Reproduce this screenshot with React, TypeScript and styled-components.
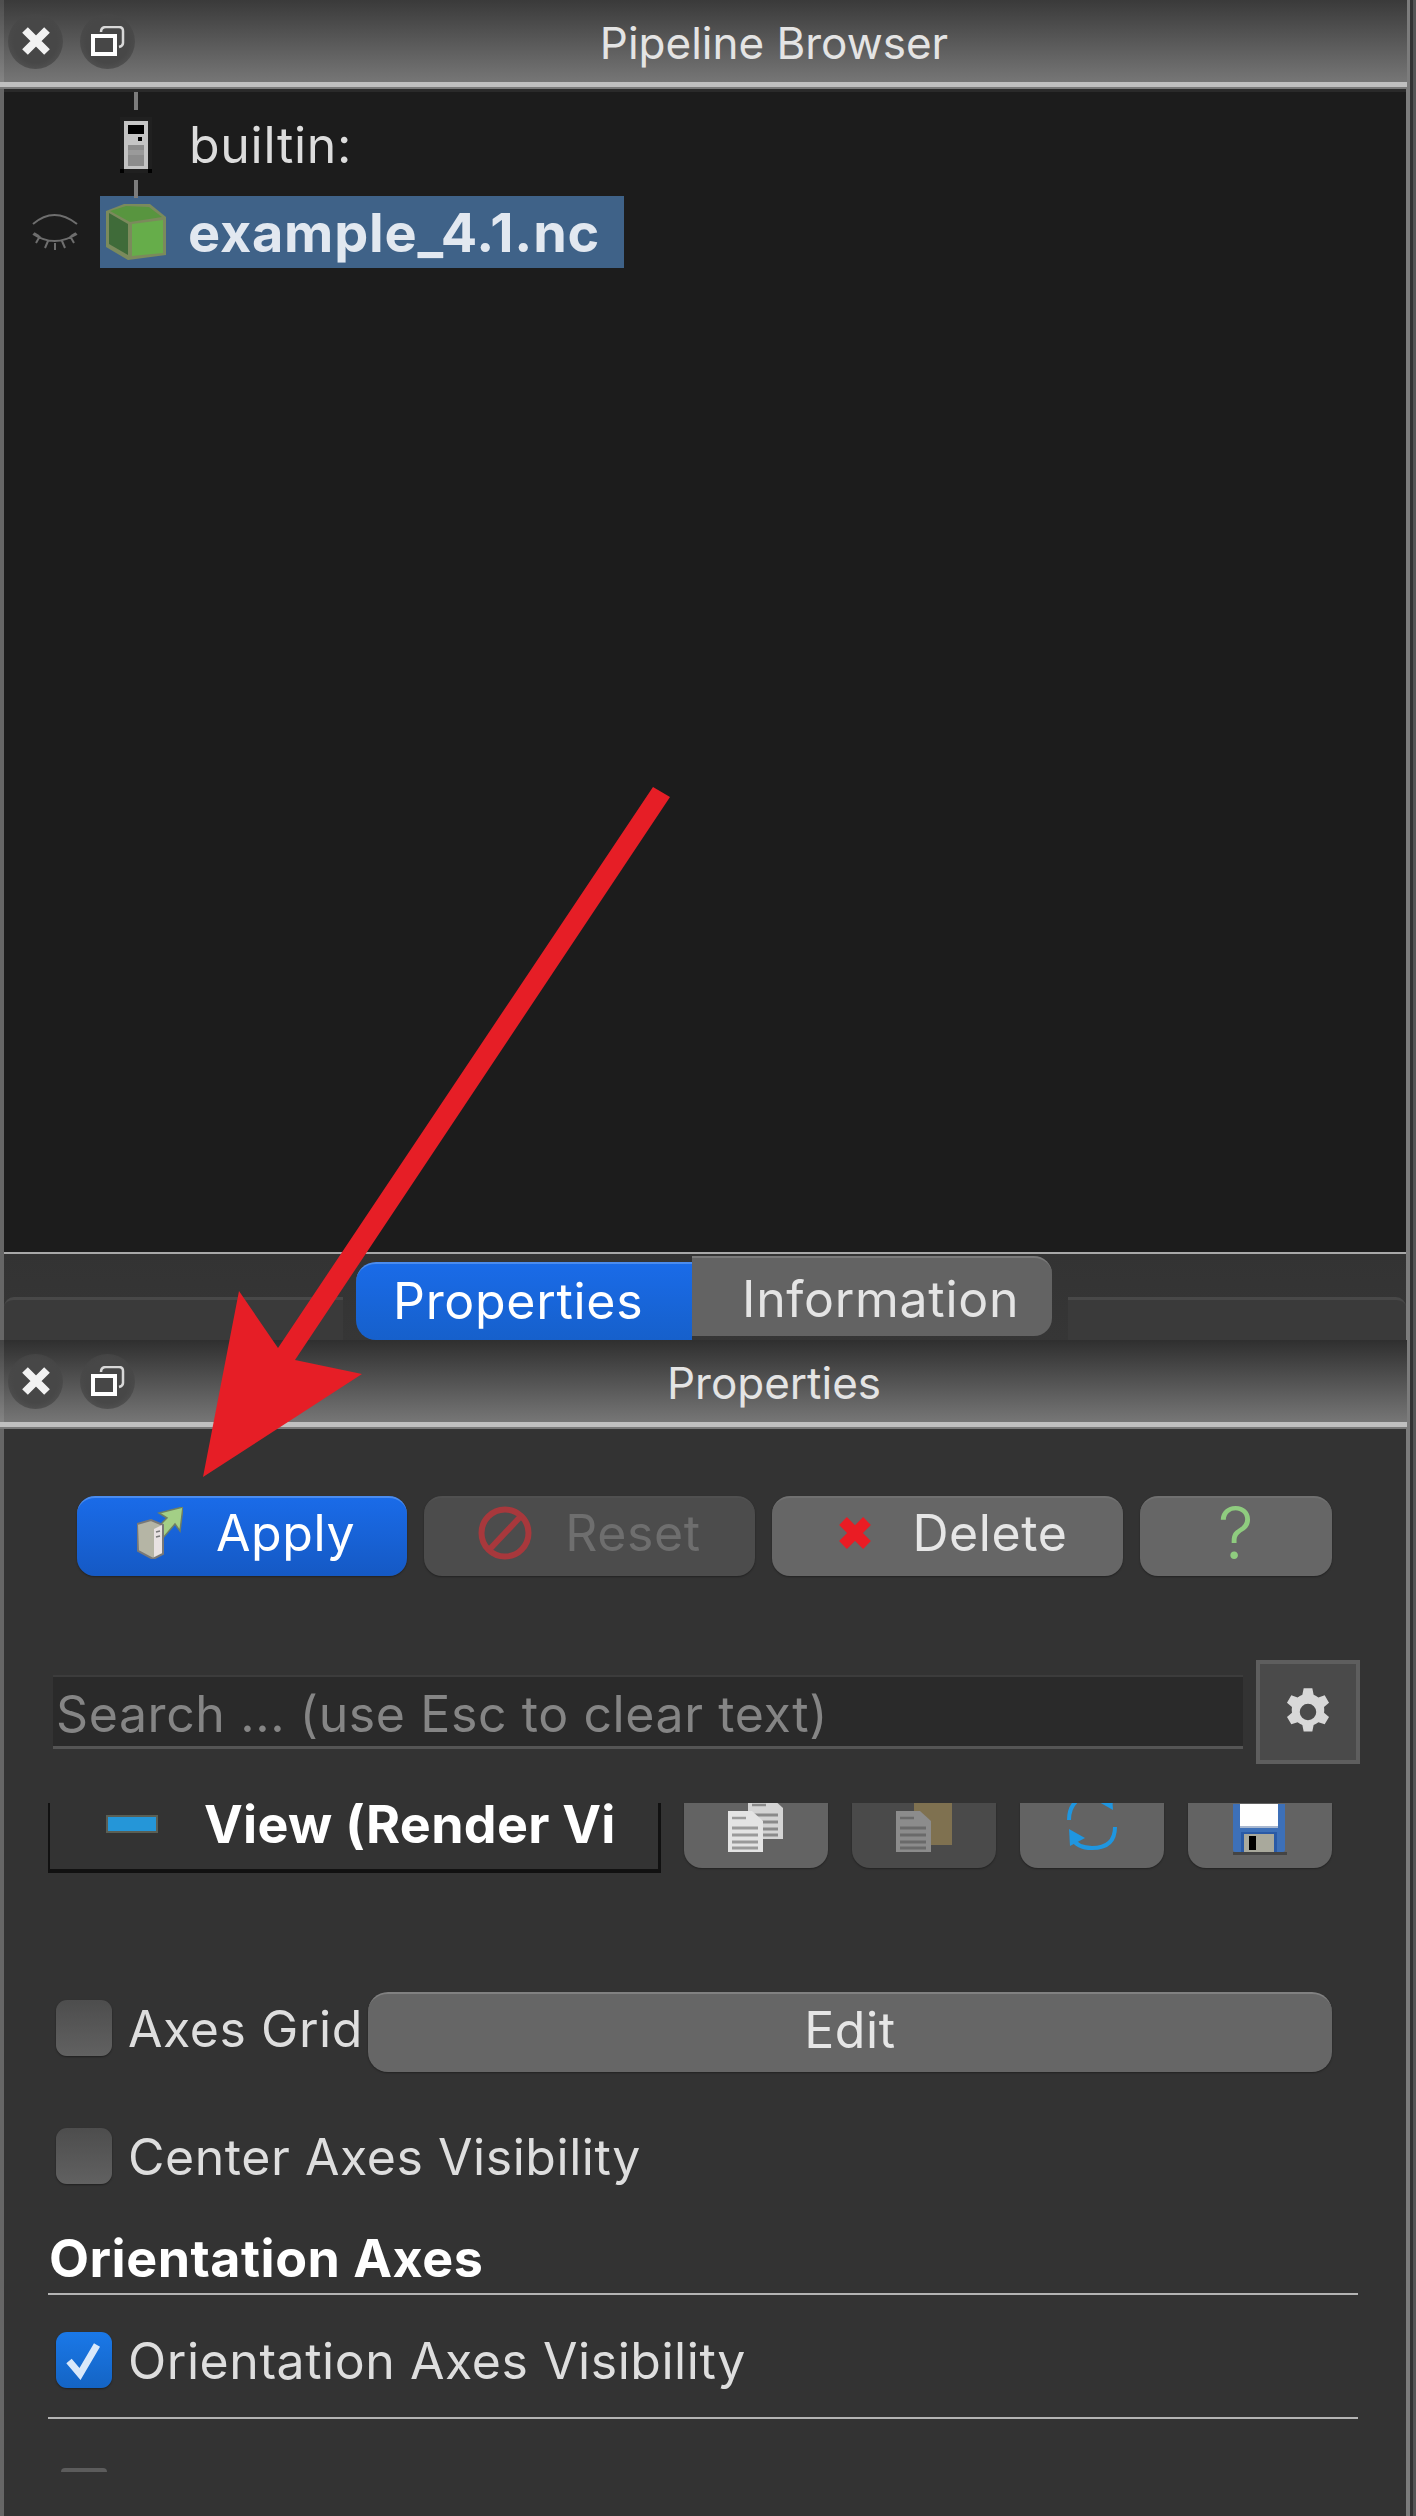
import React from "react";
import styled, { createGlobalStyle } from "styled-components";

const Global = createGlobalStyle`
  html, body { margin: 0; padding: 0; background: #333; }
  body { font-family: Inter, "Liberation Sans", Arial, sans-serif; }
`;

const Page = styled.div`
  position: relative;
  width: 1416px;
  height: 2516px;
  overflow: hidden;
  background: #333;
  box-shadow: inset -3px 0 0 #555;
  display: flex;
  flex-direction: column;
  color: #e6e6e6;
`;

const Dock = styled.section<{ $h: number }>`
  width: 1410px;
  height: ${(p) => p.$h}px;
  display: flex;
  flex-direction: column;
  flex: none;
  box-sizing: border-box;
  border-left: 4px solid #666;
  border-right: 4px solid #7c7c7c;
`;

const TitleBar = styled.header<{ $top: string }>`
  height: 82px;
  margin-left: -4px;
  margin-right: -1px;
  flex: none;
  display: flex;
  align-items: center;
  background: linear-gradient(${(p) => p.$top}, #767676);
  border-bottom: 5px solid #c0c0c0;
  box-shadow: inset 4px 0 0 rgba(255, 255, 255, 0.1), 0 2px 0 #7a7a7a;
`;

const TitleButtons = styled.div`
  display: flex;
  gap: 17px;
  padding-left: 8px;
  flex: none;
`;

const RoundButton = styled.div`
  width: 55px;
  height: 55px;
  border-radius: 50%;
  background: radial-gradient(circle, #474747 55%, rgba(70, 70, 70, 0.6) 80%, rgba(70, 70, 70, 0) 100%);
  display: flex;
  align-items: center;
  justify-content: center;
`;

const TitleText = styled.h1`
  flex: 1;
  margin: 0;
  padding: 4px 0 0 6px;
  font-weight: 400;
  font-size: 44px;
  line-height: 60px;
  text-align: center;
  color: #e4e4e4;
`;

const TreePane = styled.div`
  flex: 1;
  min-height: 0;
  background: #1c1c1c;
  border-top: 3px solid #2a2a2a;
  margin-top: 2px;
  display: flex;
  flex-direction: column;
`;

const Connector = styled.div`
  position: relative;
  z-index: 1;
  width: 4px;
  height: 18px;
  margin-left: 130px;
  background: #7c7c7c;
  flex: none;
`;

const ServerRow = styled.div`
  height: 70px;
  padding-left: 116px;
  display: flex;
  align-items: center;
  flex: none;
`;

const SourceRow = styled.div`
  height: 72px;
  margin-top: -2px;
  display: flex;
  align-items: center;
  flex: none;
`;

const EyeSlot = styled.div`
  width: 96px;
  flex: none;
  display: flex;
  padding-left: 28px;
  box-sizing: border-box;
`;

const ServerLabel = styled.span`
  margin-left: 37px;
  font-size: 50px;
  letter-spacing: 0.7px;
  color: #dcdcdc;
`;

const Selected = styled.div`
  display: flex;
  align-items: center;
  height: 72px;
  width: 524px;
  padding-left: 4px;
  box-sizing: border-box;
  background: #3f6288;
`;

const SourceLabel = styled.span`
  margin-left: 20px;
  font-size: 54px;
  font-weight: 700;
  color: #e2e8f0;
  letter-spacing: 0.8px;
`;

const TabStrip = styled.div`
  height: 88px;
  flex: none;
  position: relative;
  display: flex;
  padding-left: 352px;
  background: linear-gradient(#333, #363636);
  border-top: 2px solid #a8a8a8;
  box-sizing: border-box;
`;

const FrameEdge = styled.div<{ $side: "left" | "right" }>`
  position: absolute;
  top: 43px;
  bottom: 0;
  ${(p) => (p.$side === "left" ? "left: 0; width: 339px; border-radius: 10px 0 0 0;" : "right: 0; width: 338px; border-radius: 0 10px 0 0;")}
  background: #3a3a3a;
  border-top: 3px solid #484848;
  box-sizing: border-box;
`;

const TabGroup = styled.div`
  display: flex;
  position: relative;
  align-items: flex-start;
  width: 696px;
`;

const ActiveTab = styled.div`
  width: 336px;
  height: 78px;
  margin-top: 8px;
  flex: none;
  box-sizing: border-box;
  padding-left: 37px;
  font-size: 50px;
  letter-spacing: 0.7px;
  line-height: 74px;
  color: #fff;
  background: linear-gradient(#1a6be8, #1660cb);
  border-top: 2px solid #4a8cf0;
  border-radius: 20px 0 0 20px;
`;

const IdleTab = styled.div`
  width: 360px;
  height: 80px;
  margin-top: 2px;
  flex: none;
  box-sizing: border-box;
  padding-left: 50px;
  font-size: 50px;
  letter-spacing: 0.7px;
  line-height: 82px;
  color: #e4e4e4;
  background: #636363;
  border-top: 2px solid #7a7a7a;
  border-radius: 0 18px 18px 0;
`;

const PropertiesBody = styled.div`
  flex: 1;
  min-height: 0;
  margin-top: 2px;
  display: flex;
  flex-direction: column;
  background: #333;
  overflow: hidden;
`;

const ActionRow = styled.div`
  display: flex;
  margin: 67px 0 0 73px;
  gap: 17px;
  height: 80px;
  flex: none;
`;

const ActionButton = styled.button<{ $w: number; $gap?: number; $shift?: number; $kind?: "primary" | "disabled" }>`
  width: ${(p) => p.$w}px;
  height: 80px;
  padding: 0 0 8px ${(p) => p.$shift ?? 0}px;
  box-sizing: border-box;
  display: flex;
  align-items: center;
  justify-content: center;
  gap: ${(p) => p.$gap ?? 33}px;
  border: none;
  border-radius: 18px;
  font-family: inherit;
  font-size: 50px;
  letter-spacing: 0.6px;
  color: ${(p) => (p.$kind === "primary" ? "#fff" : p.$kind === "disabled" ? "#6e6e6e" : "#e6e6e6")};
  background: ${(p) =>
    p.$kind === "primary"
      ? "linear-gradient(#1a6be8, #1559c4)"
      : p.$kind === "disabled"
        ? "#4c4c4c"
        : "#666"};
  border-top: 2px solid
    ${(p) => (p.$kind === "primary" ? "#4a8cf0" : p.$kind === "disabled" ? "#505050" : "#707070")};
  box-shadow: 0 1px 2px rgba(0, 0, 0, 0.35);
`;

const HelpMark = styled.span`
  color: #8fcc7f;
  font-size: 72px;
  font-weight: 300;
  line-height: 1;
`;

const SearchRow = styled.div`
  display: flex;
  align-items: center;
  margin: 84px 0 0 49px;
  flex: none;
  height: 104px;
`;

const SearchBox = styled.div`
  width: 1190px;
  height: 74px;
  box-sizing: border-box;
  background: #2a2a2a;
  border-top: 2px solid #3c3c3c;
  border-bottom: 3px solid #555;
  font-size: 50px;
  letter-spacing: 0.6px;
  line-height: 74px;
  padding-left: 3px;
  color: #858585;
  margin-right: 13px;
  white-space: nowrap;
`;

const GearButton = styled.div`
  width: 104px;
  height: 104px;
  box-sizing: border-box;
  border: 4px solid #5e5e5e;
  background: #4a4a4a;
  display: flex;
  align-items: center;
  justify-content: center;
`;

const ClipRow = styled.div`
  height: 70px;
  margin: 39px 0 0 0;
  flex: none;
  display: flex;
  overflow: hidden;
  padding-left: 44px;
`;

const ViewLabel = styled.div`
  width: 613px;
  height: 70px;
  flex: none;
  box-sizing: border-box;
  border-left: 2px solid #111;
  border-right: 3px solid #111;
  border-bottom: 4px solid #111;
  display: flex;
  align-items: flex-start;
  white-space: nowrap;
`;

const ViewSwatch = styled.div`
  width: 52px;
  height: 18px;
  margin: 12px 46px 0 56px;
  box-sizing: border-box;
  flex: none;
  background: #2596d8;
  border: 2px solid #5a5f55;
`;

const ViewText = styled.span`
  font-size: 52px;
  font-weight: 700;
  color: #fff;
  line-height: 44px;
  letter-spacing: 0.3px;
`;

const ToolRow = styled.div`
  display: flex;
  gap: 24px;
  margin-left: 23px;
  flex: none;
`;

const ToolButton = styled.div<{ $dim?: boolean; $pb: number }>`
  width: 144px;
  height: 65px;
  box-sizing: border-box;
  padding-bottom: ${(p) => p.$pb}px;
  background: ${(p) => (p.$dim ? "#4a4a4a" : "#636363")};
  border-radius: 0 0 18px 18px;
  box-shadow: 0 1px 2px rgba(0, 0, 0, 0.35);
  display: flex;
  justify-content: center;
  align-items: flex-end;
  overflow: hidden;
`;

const CheckRow = styled.div<{ $mt: number; $h: number }>`
  display: flex;
  align-items: center;
  flex: none;
  height: ${(p) => p.$h}px;
  margin: ${(p) => p.$mt}px 0 0 52px;
`;

const CheckBox = styled.div<{ $on?: boolean }>`
  width: 56px;
  height: 56px;
  flex: none;
  border-radius: 11px;
  background: ${(p) => (p.$on ? "linear-gradient(#1a78e8, #1464c4)" : "linear-gradient(#4d4d4d, #616161)")};
  box-shadow: 0 1px 2px rgba(0, 0, 0, 0.4);
  display: flex;
  align-items: center;
  justify-content: center;
`;

const CheckLabel = styled.span`
  font-size: 50px;
  letter-spacing: 0.55px;
  color: #dedede;
  margin-left: 16px;
  padding-top: 2px;
  white-space: nowrap;
`;

const EditButton = styled.div`
  width: 964px;
  height: 80px;
  flex: none;
  align-self: flex-start;
  margin: 0 74px 0 auto;
  box-sizing: border-box;
  background: #666;
  border-top: 2px solid #818181;
  border-radius: 20px;
  box-shadow: 0 1px 2px rgba(0, 0, 0, 0.35);
  text-align: center;
  font-size: 50px;
  letter-spacing: 0.6px;
  line-height: 72px;
  color: #e6e6e6;
`;

const SectionTitle = styled.h2`
  margin: 33px 0 0 45px;
  font-size: 52px;
  font-weight: 700;
  line-height: 60px;
  color: #fff;
  letter-spacing: 0.5px;
  flex: none;
`;

const Rule = styled.hr<{ $mt: number }>`
  margin: ${(p) => p.$mt}px 48px 0 44px;
  height: 2px;
  border: none;
  background: #b4b4b4;
  flex: none;
`;

const PeekClip = styled.div`
  height: 4px;
  margin: 49px 0 0 57px;
  width: 46px;
  border-radius: 10px 10px 0 0;
  background: #5c5c5c;
  flex: none;
`;

const Arrow = styled.svg`
  position: absolute;
  inset: 0;
  width: 1416px;
  height: 2516px;
  pointer-events: none;
`;

const CloseIcon = () => (
  <svg width="32" height="32" viewBox="0 0 32 32">
    <path d="M5 5 L27 27 M27 5 L5 27" stroke="#f2f2f2" strokeWidth="8" fill="none" />
  </svg>
);

const FloatIcon = () => (
  <svg width="34" height="30" viewBox="0 0 34 30">
    <path d="M10 6 Q10 1 15 1 H28 Q32 1 32 5 V17 Q32 20 28 21" stroke="#d8d8d8" strokeWidth="2.5" fill="none" />
    <rect x="2" y="10" width="22" height="18" fill="none" stroke="#fff" strokeWidth="4" />
  </svg>
);

const ServerIcon = () => (
  <svg width="32" height="56" viewBox="0 0 32 56">
    <rect width="32" height="56" fill="#202020" />
    <rect x="4" y="4" width="24" height="48" fill="#c4c4c4" />
    <rect x="8" y="8" width="16" height="9" fill="#000" />
    <rect x="18" y="20" width="4" height="4" fill="#000" />
    <rect x="8" y="28" width="16" height="21" fill="#8c8c8c" />
    <rect x="8" y="33" width="16" height="5" fill="#9a9a9a" />
    <rect y="52" width="4" height="4" fill="#000" />
    <rect x="28" y="52" width="4" height="4" fill="#000" />
  </svg>
);

const CubeIcon = () => (
  <svg width="64" height="58" viewBox="0 0 64 58">
    <path d="M2 8 L20 1 L46 1 L62 14 L62 52 L24 57 L2 44 Z" fill="#7b8a5c" />
    <path d="M5 10 L24 21 L24 52 L5 41 Z" fill="#3f6b39" />
    <path d="M6 8 L22 3 L45 4 L58 14 L26 19 Z" fill="#58953f" />
    <path d="M28 21 L59 17 L59 50 L28 53 Z" fill="#66ad4a" />
  </svg>
);

const EyeIcon = () => (
  <svg width="46" height="40" viewBox="0 0 46 40" fill="none" stroke="#6e6e6e" strokeWidth="2">
    <path d="M1 12 Q22 -6 45 12" />
    <path d="M1 22 Q22 36 45 22 M2 21 L7 24 M44 21 L39 24 M8 24 L4 31 M38 24 L42 31 M16 29 L13 36 M30 29 L33 36 M23 31 L23 38" />
  </svg>
);

const ApplyIcon = () => (
  <svg width="46" height="52" viewBox="0 0 46 52">
    <path d="M23 18 L30 11 L22 6 L46 0 L43 24 L38 17 L26 31 Z" fill="#a3cf86" stroke="#6f7f63" strokeWidth="1.5" />
    <path d="M0 17 L14 13 L26 18 L26 47 L16 52 L1 44 Z" fill="#b5b5a5" stroke="#787878" strokeWidth="2" />
    <path d="M17 22 L25 18 L25 46 L17 50 Z" fill="#e8e2e2" />
    <path d="M19 25 L23 24 M19 30 L23 29" stroke="#777" strokeWidth="1.5" />
  </svg>
);

const ResetIcon = () => (
  <svg width="54" height="54" viewBox="0 0 54 54" fill="none">
    <circle cx="27" cy="27" r="23.5" stroke="#a8383c" strokeWidth="6" />
    <path d="M11 44 L43 10" stroke="#a8383c" strokeWidth="6" />
  </svg>
);

const DeleteIcon = () => (
  <svg width="38" height="38" viewBox="0 0 38 38">
    <path d="M7 7 L31 31 M31 7 L7 31" stroke="#ea1c24" strokeWidth="11" fill="none" />
  </svg>
);

const GearIcon = () => (
  <svg width="52" height="54" viewBox="0 0 24 24" fill="#d8d8d8">
    <path
      fillRule="evenodd"
      d="M10 1 h4 l.6 3 a8 8 0 0 1 2.2 1.3 l2.9-1 2 3.4 -2.3 2 a8 8 0 0 1 0 2.6 l2.3 2 -2 3.4 -2.9-1 a8 8 0 0 1-2.2 1.3 l-.6 3 h-4 l-.6-3 a8 8 0 0 1-2.2-1.3 l-2.9 1 -2-3.4 2.3-2 a8 8 0 0 1 0-2.6 l-2.3-2 2-3.4 2.9 1 a8 8 0 0 1 2.2-1.3 Z M12 8.2 a3.8 3.8 0 1 0 0 7.6 a3.8 3.8 0 1 0 0-7.6 Z"
    />
  </svg>
);

const Doc = ({ x, y, fill, line }: { x: number; y: number; fill: string; line: string }) => (
  <g transform={`translate(${x} ${y})`}>
    <path d="M0 0 H24 L35 10 V41 H0 Z" fill={fill} />
    <path d="M4 7 H18" stroke={line} strokeWidth="2.5" />
    <path d="M4 17 H30 M4 24 H30 M4 31 H30 M4 37 H30" stroke={line} strokeWidth="3" />
  </g>
);

const CopyIcon = () => (
  <svg width="56" height="49" viewBox="0 0 56 49">
    <Doc x={20} y={-5} fill="#d4d4d4" line="#8a8a8a" />
    <Doc x={0} y={8} fill="#e4e4e4" line="#9a9a9a" />
  </svg>
);

const PasteIcon = () => (
  <svg width="56" height="49" viewBox="0 0 56 49">
    <rect x="18" y="-4" width="38" height="46" fill="#7f7150" />
    <Doc x={0} y={8} fill="#8c8c8c" line="#6a6a6a" />
  </svg>
);

const RefreshIcon = () => (
  <svg width="50" height="49" viewBox="0 0 50 49" fill="none">
    <path d="M2 18 Q2 0 18 -6 M47 -2 L44 0" stroke="#1f96e0" strokeWidth="4" />
    <path d="M48 25 Q48 46 25 46 Q10 46 5 36" stroke="#1f96e0" strokeWidth="4" />
    <path d="M2 27 L3 44 L18 36 Z" fill="#1f96e0" />
    <path d="M46 8 L45 -6 L32 0 Z" fill="#1f96e0" />
  </svg>
);

const SaveIcon = () => (
  <svg width="54" height="51" viewBox="0 0 54 51">
    <rect x="0" y="-10" width="52" height="58" rx="2" fill="#3d70b8" />
    <rect x="7" y="-10" width="38" height="32" fill="#fff" />
    <rect x="7" y="22" width="38" height="2" fill="#a8b8d0" />
    <rect x="8" y="28" width="36" height="20" fill="#2a5aa6" />
    <rect x="11" y="30" width="30" height="18" fill="#a9a99c" />
    <rect x="16" y="32" width="7" height="14" fill="#000" />
    <rect x="-2" y="48" width="56" height="3" fill="#444" />
  </svg>
);

const CheckMark = () => (
  <svg width="40" height="40" viewBox="0 0 40 40">
    <path d="M5 21 L16 34 L33 5" stroke="#d9e8fa" strokeWidth="7" fill="none" />
  </svg>
);

export default function App() {
  return (
    <Page>
      <Global />
      <Dock $h={1252}>
        <TitleBar $top="#3a3a3a">
          <TitleButtons>
            <RoundButton><CloseIcon /></RoundButton>
            <RoundButton><FloatIcon /></RoundButton>
          </TitleButtons>
          <TitleText>Pipeline Browser</TitleText>
        </TitleBar>
        <TreePane>
          <Connector />
          <ServerRow>
            <ServerIcon />
            <ServerLabel>builtin:</ServerLabel>
          </ServerRow>
          <Connector />
          <SourceRow>
            <EyeSlot><EyeIcon /></EyeSlot>
            <Selected>
              <CubeIcon />
              <SourceLabel>example_4.1.nc</SourceLabel>
            </Selected>
          </SourceRow>
        </TreePane>
      </Dock>
      <Dock $h={1264}>
        <TabStrip>
          <FrameEdge $side="left" />
          <FrameEdge $side="right" />
          <TabGroup>
            <ActiveTab>Properties</ActiveTab>
            <IdleTab>Information</IdleTab>
          </TabGroup>
        </TabStrip>
        <TitleBar $top="#2f2f2f">
          <TitleButtons>
            <RoundButton><CloseIcon /></RoundButton>
            <RoundButton><FloatIcon /></RoundButton>
          </TitleButtons>
          <TitleText>Properties</TitleText>
        </TitleBar>
        <PropertiesBody>
          <ActionRow>
            <ActionButton $w={330} $shift={8} $kind="primary"><ApplyIcon />Apply</ActionButton>
            <ActionButton $w={331} $kind="disabled"><ResetIcon />Reset</ActionButton>
            <ActionButton $w={351} $gap={38} $shift={9}><DeleteIcon />Delete</ActionButton>
            <ActionButton $w={192}><HelpMark>?</HelpMark></ActionButton>
          </ActionRow>
          <SearchRow>
            <SearchBox>Search ... (use Esc to clear text)</SearchBox>
            <GearButton><GearIcon /></GearButton>
          </SearchRow>
          <ClipRow>
            <ViewLabel>
              <ViewSwatch />
              <ViewText>View (Render Vi</ViewText>
            </ViewLabel>
            <ToolRow>
              <ToolButton $pb={16}><CopyIcon /></ToolButton>
              <ToolButton $dim $pb={16}><PasteIcon /></ToolButton>
              <ToolButton $pb={17}><RefreshIcon /></ToolButton>
              <ToolButton $pb={13}><SaveIcon /></ToolButton>
            </ToolRow>
          </ClipRow>
          <CheckRow $mt={119} $h={72}>
            <CheckBox />
            <CheckLabel>Axes Grid</CheckLabel>
            <EditButton>Edit</EditButton>
          </CheckRow>
          <CheckRow $mt={52} $h={80}>
            <CheckBox />
            <CheckLabel>Center Axes Visibility</CheckLabel>
          </CheckRow>
          <SectionTitle>Orientation Axes</SectionTitle>
          <Rule $mt={4} />
          <CheckRow $mt={25} $h={80}>
            <CheckBox $on><CheckMark /></CheckBox>
            <CheckLabel>Orientation Axes Visibility</CheckLabel>
          </CheckRow>
          <Rule $mt={17} />
          <PeekClip />
        </PropertiesBody>
      </Dock>
      <Arrow viewBox="0 0 1416 2516">
        <path
          d="M670 797 L653 787 L278 1348 L239 1291 L203 1477 L362 1374 L295 1360 Z"
          fill="#e61e26"
        />
      </Arrow>
    </Page>
  );
}
